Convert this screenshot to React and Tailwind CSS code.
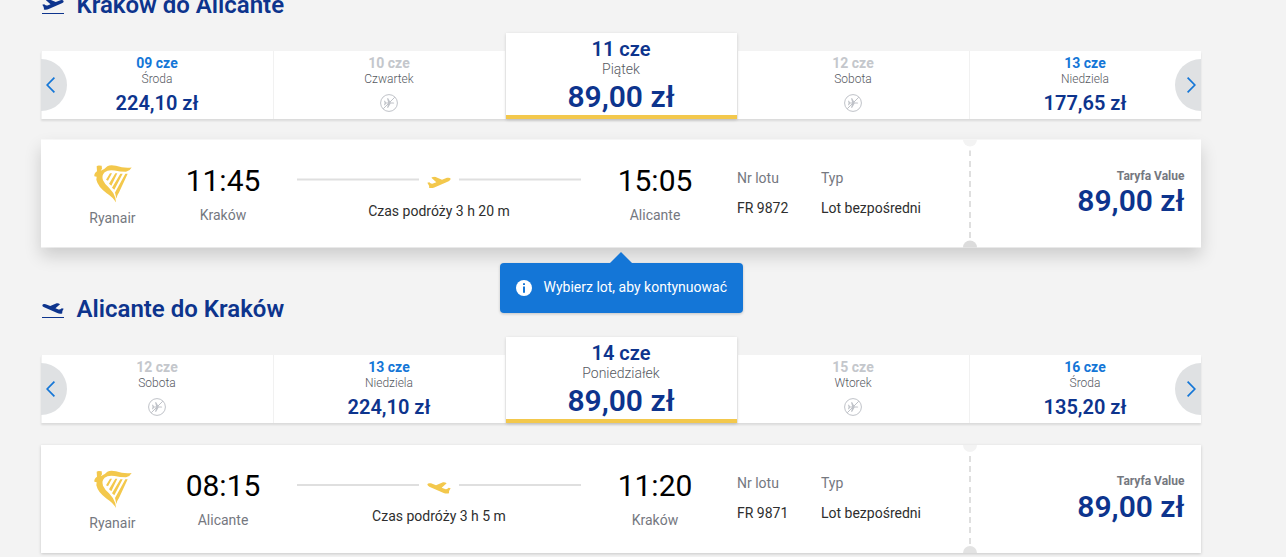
import React from 'react';
import clsx from 'clsx';

const trips = [
  {
    title: 'Kraków do Alicante',
    days: [
      { date: '09 cze', day: 'Środa', price: '224,10 zł' },
      { date: '10 cze', day: 'Czwartek' },
      { date: '11 cze', day: 'Piątek', price: '89,00 zł', active: true },
      { date: '12 cze', day: 'Sobota' },
      { date: '13 cze', day: 'Niedziela', price: '177,65 zł' },
    ],
    flight: { from: 'Kraków', to: 'Alicante', departs: '11:45', arrives: '15:05', duration: '3 h 20 m', number: 'FR 9872', price: '89,00 zł' },
    raised: true,
  },
  {
    title: 'Alicante do Kraków',
    inbound: true,
    days: [
      { date: '12 cze', day: 'Sobota' },
      { date: '13 cze', day: 'Niedziela', price: '224,10 zł' },
      { date: '14 cze', day: 'Poniedziałek', price: '89,00 zł', active: true },
      { date: '15 cze', day: 'Wtorek' },
      { date: '16 cze', day: 'Środa', price: '135,20 zł' },
    ],
    flight: { from: 'Alicante', to: 'Kraków', departs: '08:15', arrives: '11:20', duration: '3 h 5 m', number: 'FR 9871', price: '89,00 zł' },
  },
];

function Plane({ className, inbound }) {
  return (
    <svg viewBox="0 0 72 36" fill="currentColor" className={clsx(className, inbound && '-scale-x-100')}>
      <path d="M1 19L7 17Q14 23 18 21L28 17L13 4Q18 0 24 1L45 10L60 4Q69 2 71 7Q71 11 65 14L22 33Q14 36 6 34Q8 28 1 19Z" />
    </svg>
  );
}

function Chevron({ className }) {
  return (
    <svg viewBox="0 0 9 16" className={clsx('h-4 w-[9px] shrink-0', className)} fill="none" stroke="currentColor" strokeWidth="1.7">
      <path d="M8.4 0.6L1.2 8L8.4 15.4" />
    </svg>
  );
}

function NoFlight() {
  return (
    <svg viewBox="0 0 18 18" className="mx-auto mt-[7px] h-[18px] w-[18px] text-[#bfc2c8]" fill="none" stroke="currentColor">
      <circle cx="9" cy="9" r="8.4" />
      <path d="M3.2 14.8L14.8 3.2" />
      <path
        d="M4 6.8H5L6 8.4H8.2L7 4.2H8.2L10.6 8.4H13.2Q14.2 8.5 14.2 9Q14.2 9.5 13.2 9.6H10.6L8.2 13.8H7L8.2 9.6H6L5 11.2H4L4.6 9Z"
        fill="currentColor"
        stroke="none"
      />
    </svg>
  );
}

function Harp() {
  return (
    <svg viewBox="0 0 114 114" className="h-[38px] w-[38px] text-[#f3c84c]" fill="currentColor">
      <path d="M8 5Q12 1 23 4L24 13L20 19Q32 14 40 5Q50 0 66 4Q90 12 113 9Q108 19 96 22Q78 22 62 18Q42 15 32 23Q22 32 27 47Q32 58 45 70Q59 84 64 100L66 114Q57 98 38 86Q12 68 7 46L8 37L1 35Q0 26 9 20Z" />
      <path d="M48 26H54L42 49L36 46ZM64 26H70L52 64L45 58ZM79 28H86L61 76L54 70ZM94 28H101L75 84Q69 92 67 102L63 84Z" />
    </svg>
  );
}

function DayTab({ date, day, price, active }) {
  if (active) {
    return (
      <div className="ml-px h-[86px] border-b-4 border-[#f3c84c] bg-white pt-1 pr-px text-center shadow-[0_1px_3px_rgba(0,0,0,0.16)]">
        <div className="text-xl leading-6 font-semibold text-[#0d348d]">{date}</div>
        <div className="text-sm leading-4 font-light text-[#56595f]">{day}</div>
        <div className="text-[30px] leading-10 font-semibold text-[#0d348d]">{price}</div>
      </div>
    );
  }
  return (
    <div className="h-[68px] border-l border-[#f1f1f1] bg-white pt-1 pr-px text-center">
      <div className={clsx('text-sm leading-4 font-bold', price ? 'text-[#1476d7]' : 'text-[#c4c7cc]')}>{date}</div>
      <div className="text-xs leading-4 font-light text-[#56595f]">{day}</div>
      {price ? <div className="text-xl leading-[33px] font-semibold text-[#0d348d]">{price}</div> : <NoFlight />}
    </div>
  );
}

function DayTabs({ days }) {
  return (
    <div className="relative mt-3 grid h-[86px] grid-cols-5 items-end">
      <div className="absolute inset-x-0 bottom-0 h-[68px] shadow-[0_2px_2px_rgba(0,0,0,0.1)]" />
      {days.map((d) => (
        <div key={d.date} className={clsx('relative', d.active && 'z-10')}>
          <DayTab {...d} />
        </div>
      ))}
      <button className="absolute bottom-2 left-0 z-10 flex h-[52px] w-[26px] items-center rounded-r-full bg-[#dfe1e3] pl-[5px] text-[#1476d7]">
        <Chevron />
      </button>
      <button className="absolute right-0 bottom-2 z-10 flex h-[52px] w-[26px] items-center justify-end rounded-l-full bg-[#dfe1e3] pr-[5px] text-[#1476d7]">
        <Chevron className="-scale-x-100" />
      </button>
    </div>
  );
}

function Stop({ time, city }) {
  return (
    <div className="w-[78px] pt-5 text-center">
      <div className="text-[30px] leading-[41px] font-normal text-black">{time}</div>
      <div className="mt-1 text-sm leading-5 text-[#75787f]">{city}</div>
    </div>
  );
}

function Detail({ label, value, className }) {
  return (
    <div className={clsx('pt-7 text-sm leading-5', className)}>
      <div className="text-[#75787f]">{label}</div>
      <div className="mt-2.5 text-[#2e2e2e]">{value}</div>
    </div>
  );
}

function FlightCard({ flight, inbound, raised }) {
  return (
    <div
      className={clsx(
        'relative mt-[22px] flex h-[108px] bg-white',
        raised ? '-translate-y-[1.5px] shadow-[0_8px_16px_rgba(0,0,0,0.16)]' : 'shadow-[0_1px_3px_rgba(0,0,0,0.18)]',
      )}
    >
      <div className="flex w-[143px] flex-col items-center pt-[25px]">
        <Harp />
        <div className="mt-[5px] text-sm leading-5 text-[#75787f]">Ryanair</div>
      </div>
      <Stop time={flight.departs} city={flight.from} />
      <div className="mx-[35px] w-[284px] pt-[34px]">
        <div className="flex h-3 items-center">
          <div className="h-0.5 w-[122px] bg-[#dfdfdf]" />
          <Plane inbound={inbound} className="mx-2 mt-1.5 h-3 w-6 text-[#f3c84c]" />
          <div className="h-0.5 w-[122px] bg-[#dfdfdf]" />
        </div>
        <div className="mt-[15px] text-center text-sm leading-5 text-[#2e2e2e]">Czas podróży {flight.duration}</div>
      </div>
      <Stop time={flight.arrives} city={flight.to} />
      <Detail label="Nr lotu" value={flight.number} className="ml-[43px] w-[84px]" />
      <Detail label="Typ" value="Lot bezpośredni" className="w-[142px]" />
      <div className="relative w-[14px] overflow-hidden">
        <div className="absolute -top-[7px] left-0 h-[14px] w-[14px] rounded-full bg-[#f3f3f3]" />
        <div className="mx-auto mt-[11px] h-[88px] w-0.5 bg-[repeating-linear-gradient(to_bottom,#dfdfdf_0_6px,transparent_6px_10.2px)]" />
        <div className={clsx('absolute -bottom-[7px] left-0 h-[14px] w-[14px] rounded-full', raised ? 'bg-[#dcdcdc]' : 'bg-[#e3e3e3]')} />
      </div>
      <div className="flex-1 pt-7 pr-[16.5px] text-right">
        <div className="text-xs leading-4 font-bold text-[#75787f]">Taryfa Value</div>
        <div className={clsx('text-[30px] font-semibold text-[#0d348d]', raised ? 'leading-[34px]' : 'leading-9')}>{flight.price}</div>
      </div>
    </div>
  );
}

function ContinueHint() {
  return (
    <div className="absolute top-[263px] left-[500px] z-20 flex h-[50px] w-[243px] items-center rounded bg-[#1476d7] pl-4 text-sm text-white shadow-[0_1px_3px_rgba(0,0,0,0.2)]">
      <svg viewBox="0 0 24 12" className="absolute -top-[11px] left-[109px] h-3 w-6" fill="#1476d7">
        <path d="M0 12L12 0L24 12Z" />
      </svg>
      <svg viewBox="0 0 16 16" className="mr-[11.5px] h-4 w-4">
        <circle cx="8" cy="8" r="8" fill="#fff" />
        <path d="M8 3.2V5M8 6.5V12.8" stroke="#1476d7" strokeWidth="2" />
      </svg>
      <span className="-mt-0.5 whitespace-nowrap">Wybierz lot, aby kontynuować</span>
    </div>
  );
}

export default function App() {
  return (
    <main className="relative h-[557px] overflow-hidden bg-[#f3f3f3] font-['Roboto',sans-serif]">
      <div className="-mt-[11px] ml-[41px] flex w-[1160px] flex-col gap-11">
        {trips.map((trip) => (
          <section key={trip.title}>
            <h2 className="flex h-8 items-center text-2xl font-semibold text-[#0d348d]">
              <span className="mt-[3px] mr-[11.5px] ml-px flex w-[23px] flex-col gap-[3px]">
                <Plane inbound={trip.inbound} className="h-[11px] w-[22px]" />
                <span className="h-px w-[22px] bg-[#0d348d]" />
              </span>
              {trip.title}
            </h2>
            <DayTabs days={trip.days} />
            <FlightCard flight={trip.flight} inbound={trip.inbound} raised={trip.raised} />
          </section>
        ))}
      </div>
      <ContinueHint />
    </main>
  );
}
